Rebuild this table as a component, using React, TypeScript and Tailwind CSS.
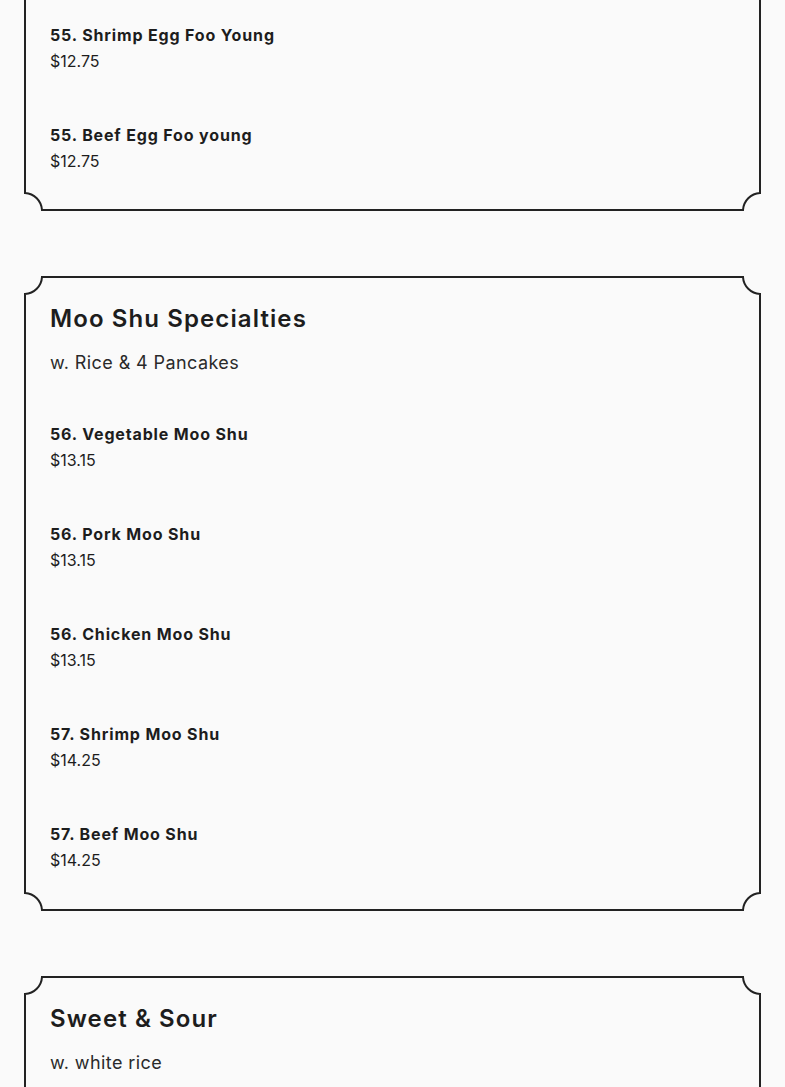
import React from 'react'

type Item = { name: string; price: string }
type Section = { title?: string; note?: string; items: Item[] }

const sections: Section[] = [
  {
    items: [
      { name: '55. Shrimp Egg Foo Young', price: '$12.75' },
      { name: '55. Beef Egg Foo young', price: '$12.75' },
    ],
  },
  {
    title: 'Moo Shu Specialties',
    note: 'w. Rice & 4 Pancakes',
    items: [
      { name: '56. Vegetable Moo Shu', price: '$13.15' },
      { name: '56. Pork Moo Shu', price: '$13.15' },
      { name: '56. Chicken Moo Shu', price: '$13.15' },
      { name: '57. Shrimp Moo Shu', price: '$14.25' },
      { name: '57. Beef Moo Shu', price: '$14.25' },
    ],
  },
  {
    title: 'Sweet & Sour',
    note: 'w. white rice',
    items: [],
  },
]

const cornerPos = {
  tl: '-top-[2px] -left-[2px]',
  tr: '-top-[2px] -right-[2px] -scale-x-100',
  bl: '-bottom-[2px] -left-[2px] -scale-y-100',
  br: '-bottom-[2px] -right-[2px] rotate-180',
}

// scalloped corner, drawn over the box border
function Corner({ pos }: { pos: keyof typeof cornerPos }) {
  return (
    <svg
      className={`absolute w-[22px] h-[22px] bg-[#fafafa] ${cornerPos[pos]}`}
      viewBox="0 0 22 22"
      fill="none"
      aria-hidden
    >
      <path d="M1 22V18A18 18 0 0 0 18 1H22" stroke="#222" strokeWidth="2" />
    </svg>
  )
}

function MenuBox({ section, first }: { section: Section; first?: boolean }) {
  return (
    <div
      className={`relative border-2 border-[#222] px-6 ${
        first ? '-mt-[40px] pt-[60px] pb-[35px]' : 'mt-[65px] pt-[25px] pb-[36px]'
      }`}
    >
      <Corner pos="tl" />
      <Corner pos="tr" />
      <Corner pos="bl" />
      <Corner pos="br" />

      {section.title && (
        <h2 className="text-[24px] leading-[32px] font-semibold tracking-[1.1px] text-[#1d1d1d]">
          {section.title}
        </h2>
      )}
      {section.note && (
        <p className="mt-[14px] text-[18px] leading-[28px] font-normal tracking-[0.4px] text-[#2a2a2a]">
          {section.note}
        </p>
      )}

      {section.items.length > 0 && (
        <div className={`flex flex-col gap-12 ${section.title ? 'mt-[44px]' : ''}`}>
          {section.items.map((it, i) => (
            <div key={i}>
              <div className="text-[16px] leading-[26px] font-bold tracking-[0.85px] text-[#1d1d1d]">
                {it.name}
              </div>
              <div className="text-[16px] leading-[26px] text-[#1d1d1d]">{it.price}</div>
            </div>
          ))}
        </div>
      )}
    </div>
  )
}

export default function App() {
  return (
    <div className="min-h-screen bg-[#fafafa] overflow-hidden font-['Inter',sans-serif]">
      <div className="mx-6 pb-24">
        {sections.map((s, i) => (
          <MenuBox key={i} section={s} first={i === 0} />
        ))}
      </div>
    </div>
  )
}
